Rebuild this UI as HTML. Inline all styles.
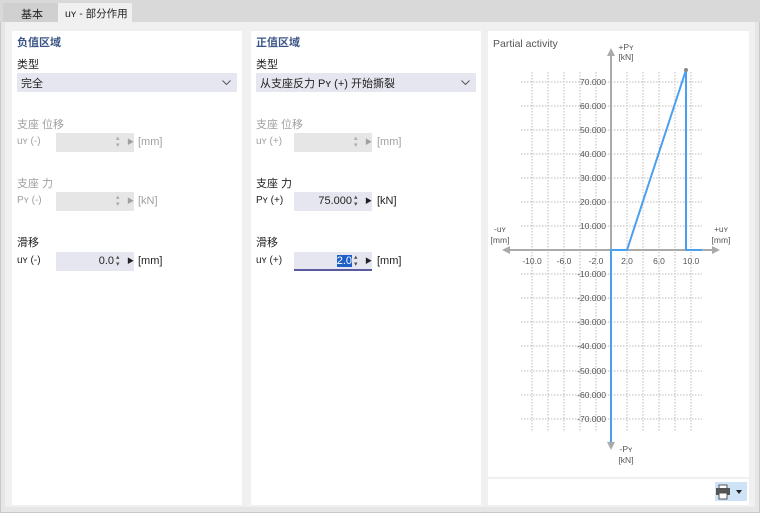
<!DOCTYPE html><html><head><meta charset="utf-8"><style>
*{margin:0;padding:0;box-sizing:border-box}
body{width:760px;height:513px;background:#f0f0f0;font-family:"Liberation Sans","Noto Sans CJK SC",sans-serif;font-size:11px;color:#222;position:relative;overflow:hidden}
.a{position:absolute;white-space:nowrap}
.p{position:absolute;background:#fff}
.h{color:#3b5586;font-weight:bold;font-size:11px}
.g{color:#a0a0a0}
.dd{position:absolute;background:#e6e6f0;height:19px;padding:2px 4px}
.in{position:absolute;height:19px;background:#e6e6f0;text-align:right;padding:3px 20px 0 0}
.dis{background:#e6e6e6}
.sp{position:absolute;font-size:7px;line-height:7px;color:#555}
.ch{position:absolute;right:6px;top:7px}
</style></head><body>
<div class="a" style="left:0;top:0;width:760px;height:22px;background:#d9d9d9"></div>
<div class="a" style="top:3px;left:3px;width:55px;height:19px;background:#d0d0d0;padding:3px 0 0 18px">基本</div>
<div class="a" style="left:58px;top:3px;width:74px;height:19px;background:#f0f0f0;padding:3px 0 0 7px;font-size:10.5px">uʏ - 部分作用</div>
<div class="a" style="left:0;top:22px;width:760px;height:491px;background:#e6e6e6;border:1px solid #c8c8c8;border-top:none"></div>
<div class="a" style="left:5px;top:22px;width:750px;height:485px;background:#f0f0f0"></div>

<div class="p" style="left:12px;top:31px;width:230px;height:474px"></div>
<div class="a h" style="left:17px;top:34px">负值区域</div>
<div class="a" style="left:17px;top:56px">类型</div>
<div class="dd" style="left:17px;top:73px;width:220px">完全<svg class="ch" width="9" height="5"><path d="M0.5 0.5L4.5 4.5L8.5 0.5" stroke="#555" fill="none"/></svg></div>
<div class="a g" style="left:17px;top:116px">支座 位移</div>
<div class="a g" style="left:17px;top:136px;font-size:10px">uʏ (-)</div>
<div class="in dis" style="left:56px;top:133px;width:78px"></div>
<div class="sp" style="left:116px;top:135px;color:#aaa">▴<br>▾</div><div class="a g" style="left:127px;top:137px;font-size:7px">▶</div>
<div class="a g" style="left:138px;top:136px">[mm]</div>
<div class="a g" style="left:17px;top:175px">支座 力</div>
<div class="a g" style="left:17px;top:195px;font-size:10px">Pʏ (-)</div>
<div class="in dis" style="left:56px;top:192px;width:78px"></div>
<div class="sp" style="left:116px;top:194px;color:#aaa">▴<br>▾</div><div class="a g" style="left:127px;top:196px;font-size:7px">▶</div>
<div class="a g" style="left:138px;top:195px">[kN]</div>
<div class="a" style="left:17px;top:234px">滑移</div>
<div class="a" style="left:17px;top:255px;font-size:10px">uʏ (-)</div>
<div class="in" style="left:56px;top:252px;width:78px">0.0</div>
<div class="sp" style="left:116px;top:254px">▴<br>▾</div><div class="a" style="left:127px;top:256px;font-size:7px">▶</div>
<div class="a" style="left:138px;top:255px">[mm]</div>

<div class="p" style="left:251px;top:31px;width:230px;height:474px"></div>
<div class="a h" style="left:256px;top:34px">正值区域</div>
<div class="a" style="left:256px;top:56px">类型</div>
<div class="dd" style="left:256px;top:73px;width:220px">从支座反力 Pʏ (+) 开始撕裂<svg class="ch" width="9" height="5"><path d="M0.5 0.5L4.5 4.5L8.5 0.5" stroke="#555" fill="none"/></svg></div>
<div class="a g" style="left:256px;top:116px">支座 位移</div>
<div class="a g" style="left:256px;top:136px;font-size:10px">uʏ (+)</div>
<div class="in dis" style="left:294px;top:133px;width:78px"></div>
<div class="sp" style="left:354px;top:135px;color:#aaa">▴<br>▾</div><div class="a g" style="left:365px;top:137px;font-size:7px">▶</div>
<div class="a g" style="left:377px;top:136px">[mm]</div>
<div class="a" style="left:256px;top:175px">支座 力</div>
<div class="a" style="left:256px;top:195px;font-size:10px">Pʏ (+)</div>
<div class="in" style="left:294px;top:192px;width:78px">75.000</div>
<div class="sp" style="left:354px;top:194px">▴<br>▾</div><div class="a" style="left:365px;top:196px;font-size:7px">▶</div>
<div class="a" style="left:377px;top:195px">[kN]</div>
<div class="a" style="left:256px;top:234px">滑移</div>
<div class="a" style="left:256px;top:255px;font-size:10px">uʏ (+)</div>
<div class="in" style="left:294px;top:252px;width:78px;border-bottom:2px solid #5a5aa0"><span style="background:#1e5fc8;color:#fff">2.0</span></div>
<div class="sp" style="left:354px;top:254px">▴<br>▾</div><div class="a" style="left:365px;top:256px;font-size:7px">▶</div>
<div class="a" style="left:377px;top:255px">[mm]</div>

<div class="p" style="left:488px;top:31px;width:261px;height:446px"></div>
<div class="p" style="left:488px;top:479px;width:261px;height:26px"></div>
<div class="a" style="left:715px;top:482px;width:32px;height:19px;background:#cfe3f7"></div>
<svg class="a" style="left:715px;top:482px" width="32" height="19"><rect x="4" y="3" width="8" height="4" fill="#fff" stroke="#555"/><rect x="1" y="6" width="14" height="7" fill="#555"/><rect x="4" y="11" width="8" height="6" fill="#fff" stroke="#555"/><path d="M21 8h6l-3 4z" fill="#222"/></svg>

<svg class="a" style="left:0;top:0" width="760" height="513" font-family="Liberation Sans" font-size="8.5" fill="#555">
<text x="493" y="47" font-size="10.5">Partial activity</text>
<g stroke="#bbb" stroke-dasharray="1.5,1.5" stroke-width="1">
<path d="M532 72V432M548 72V432M564 72V432M580 72V432M596 72V432M627 72V432M643 72V432M659 72V432M675 72V432M691 72V432"/>
<path d="M521 82H702M521 106H702M521 130H702M521 154H702M521 178H702M521 202H702M521 226H702M521 274H702M521 298H702M521 322H702M521 346H702M521 371H702M521 395H702M521 419H702"/>
</g>
<g stroke="#aaa" stroke-width="2" fill="#aaa"><path d="M504 250H712M611 442V56" /><path d="M502 250l8-4v8zM720 250l-8-4v8zM611 48l-4 8h8zM611 450l-4-8h8z" stroke="none"/></g>
<g text-anchor="end" font-size="8.5"><text x="606" y="85">70.000</text><text x="606" y="109">60.000</text><text x="606" y="133">50.000</text><text x="606" y="157">40.000</text><text x="606" y="181">30.000</text><text x="606" y="205">20.000</text><text x="606" y="229">10.000</text><text x="606" y="277">-10.000</text><text x="606" y="301">-20.000</text><text x="606" y="325">-30.000</text><text x="606" y="349">-40.000</text><text x="606" y="374">-50.000</text><text x="606" y="398">-60.000</text><text x="606" y="422">-70.000</text></g>
<g text-anchor="middle"><text x="532" y="264">-10.0</text><text x="564" y="264">-6.0</text><text x="596" y="264">-2.0</text><text x="627" y="264">2.0</text><text x="659" y="264">6.0</text><text x="691" y="264">10.0</text>
<text x="626" y="50">+Pʏ</text><text x="626" y="60">[kN]</text><text x="626" y="452">-Pʏ</text><text x="626" y="463">[kN]</text>
<text x="500" y="232">-uʏ</text><text x="500" y="243">[mm]</text><text x="721" y="232">+uʏ</text><text x="721" y="243">[mm]</text></g>
<path d="M611 442V250H627L686 70V250H702" stroke="#4a9ff0" stroke-width="2" fill="none"/>
<circle cx="686" cy="70" r="2" fill="#888"/>
</svg>
</body></html>
